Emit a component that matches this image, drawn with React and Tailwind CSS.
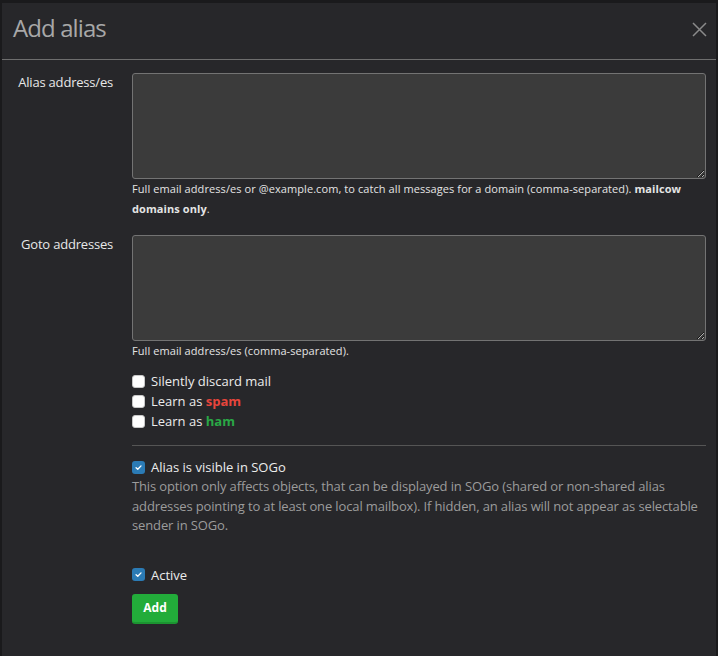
export default function App() {
  const Check = ({ checked }) =>
    checked ? (
      <span className="w-[13px] h-[13px] rounded-[3px] bg-[#2b7bb5] flex items-center justify-center shrink-0">
        <svg width="9" height="9" viewBox="0 0 10 10">
          <path d="M2.3 5.2 L4.2 7 L7.8 3.2" fill="none" stroke="#ffffff" strokeWidth="1.5" strokeLinecap="round" strokeLinejoin="round" />
        </svg>
      </span>
    ) : (
      <span className="w-[13px] h-[13px] rounded-[3px] bg-white border border-[#c8c8c8] shrink-0" />
    );

  return (
    <div className="w-[718px] h-[656px] overflow-hidden bg-[#1a1a1c] pt-[3px] pl-[2px] font-['Open_Sans','Noto_Sans',sans-serif]">
      <div className="w-[714px] h-[653px] bg-[#27272a]">
        <div className="h-[57px] flex items-center justify-between pl-[11px] pr-[9px] border-b border-[#6e6e6e]">
          <h4 className="text-[24px] leading-none text-[#a8a8a8] tracking-[-0.9px] pb-[6px]">Add alias</h4>
          <svg width="15" height="15" viewBox="0 0 15 15" className="mb-[4px]">
            <path d="M1 1 L14 14 M14 1 L1 14" stroke="#8a8a8a" strokeWidth="1.5" />
          </svg>
        </div>

        <div className="pt-[13px]">
          <div className="flex gap-[15px]">
            <label className="w-[115px] text-right pr-[4px] text-[13px] leading-[18px] text-[#e8e8e8] tracking-[-0.2px]">Alias address/es</label>
            <div className="w-[574px]">
              <textarea className="block w-full h-[106px] bg-[#3b3b3b] border border-[#737373] rounded-[3px]" />
              <p className="text-[11px] leading-[20px] text-[#e4e4e4] tracking-[0.08px]">
                Full email address/es or @example.com, to catch all messages for a domain (comma-separated). <b>mailcow domains only</b>.
              </p>
            </div>
          </div>

          <div className="flex gap-[15px] mt-[16px]">
            <label className="w-[115px] text-right pr-[4px] text-[13px] leading-[18px] text-[#e8e8e8] tracking-[-0.2px]">Goto addresses</label>
            <div className="w-[574px]">
              <textarea className="block w-full h-[106px] bg-[#3b3b3b] border border-[#737373] rounded-[3px]" />
              <p className="text-[11px] leading-[20px] text-[#e4e4e4] tracking-[0.08px]">Full email address/es (comma-separated).</p>

              <div className="mt-[10px] flex flex-col text-[13px] leading-[20px] text-[#ececec]">
                <div className="flex items-center gap-[6px]"><Check /><span>Silently discard mail</span></div>
                <div className="flex items-center gap-[6px]"><Check /><span>Learn as <b className="text-[#e8453c]">spam</b></span></div>
                <div className="flex items-center gap-[6px]"><Check /><span>Learn as <b className="text-[#2aa846]">ham</b></span></div>
              </div>

              <hr className="mt-[14px] border-t border-[#555555]" />

              <div className="mt-[11px] flex items-center gap-[6px] text-[13px] leading-[20px] text-[#ececec]">
                <Check checked /><span>Alias is visible in SOGo</span>
              </div>
              <p className="text-[13px] leading-[19.5px] text-[#9c9c9c] tracking-[-0.13px]">
                This option only affects objects, that can be displayed in SOGo (shared or non-shared alias addresses pointing to at least one local mailbox). If hidden, an alias will not appear as selectable sender in SOGo.
              </p>

              <div className="mt-[29px] flex items-center gap-[6px] text-[13px] leading-[20px] text-[#ececec]">
                <Check checked /><span>Active</span>
              </div>
              <button className="mt-[9px] w-[46px] h-[30px] rounded-[3px] bg-[#22ac3a] border-b-2 border-[#1c9431] text-white font-bold text-[12px]">Add</button>
            </div>
          </div>
        </div>
      </div>
    </div>
  );
}
